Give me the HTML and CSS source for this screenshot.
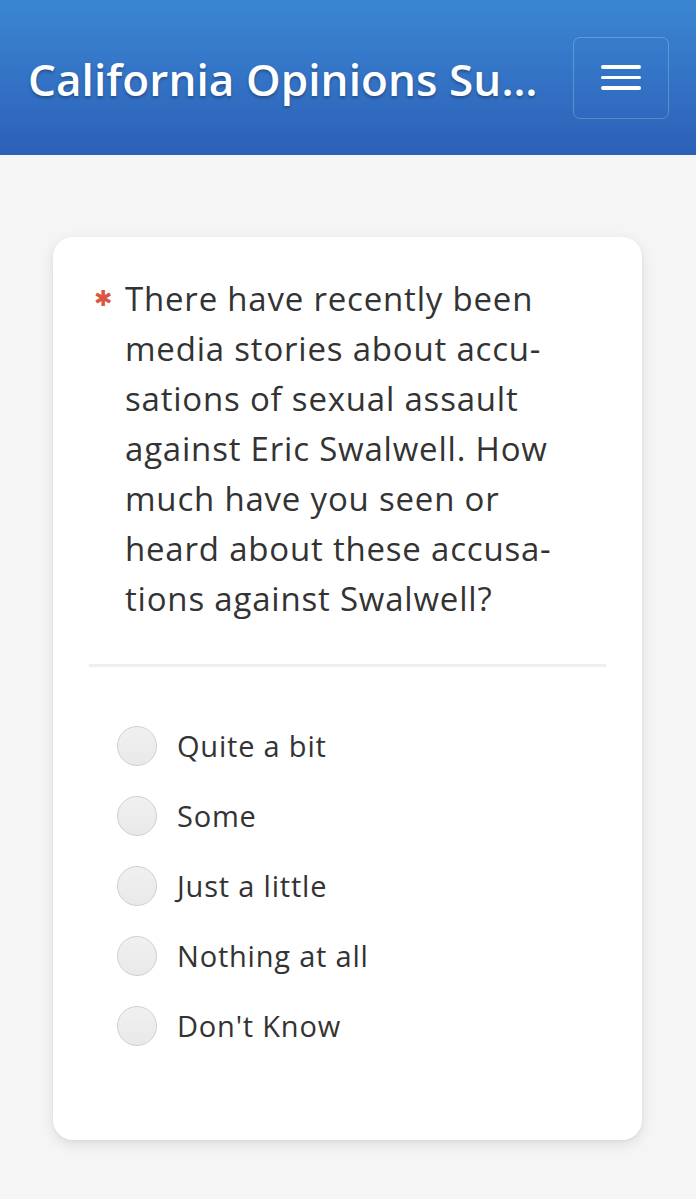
FILE: index.html
```html
<!DOCTYPE html>
<html lang="en">
<head>
<meta charset="utf-8">
<title>California Opinions Survey</title>
<link rel="stylesheet" href="styles.css">
</head>
<body>
<header class="topbar">
  <div class="brand">California Opinions Survey</div>
  <button class="menu-btn" aria-label="Menu">
    <span class="bar"></span><span class="bar"></span><span class="bar"></span>
  </button>
</header>
<main class="page">
  <section class="card">
    <div class="question">
      <span class="req">✱</span>
      <p class="qtext">There have recently been<br>media stories about accu-<br>sations of sexual assault<br>against Eric Swalwell. How<br>much have you seen or<br>heard about these accusa-<br>tions against Swalwell?</p>
    </div>
    <hr class="divider">
    <ul class="options">
      <li class="option"><span class="radio"></span><span class="label">Quite a bit</span></li>
      <li class="option"><span class="radio"></span><span class="label">Some</span></li>
      <li class="option"><span class="radio"></span><span class="label">Just a little</span></li>
      <li class="option"><span class="radio"></span><span class="label">Nothing at all</span></li>
      <li class="option"><span class="radio"></span><span class="label">Don't Know</span></li>
    </ul>
  </section>
</main>
</body>
</html>
```

FILE: styles.css
```css
* { box-sizing: border-box; }
html, body { margin: 0; padding: 0; }
body {
  background: #f5f5f5;
  font-family: "Open Sans", "Noto Sans", sans-serif;
  color: #333;
  width: 696px;
  min-height: 1199px;
}
.topbar {
  height: 155px;
  background: linear-gradient(to bottom, #3b86d3 0%, #2c60b7 100%);
  display: flex;
  align-items: center;
  justify-content: space-between;
  padding: 0 27px 0 28px;
}
.brand {
  color: #fff;
  font-family: "Open Sans", sans-serif;
  font-weight: 600;
  font-size: 44px;
  letter-spacing: 0.1px;
  white-space: nowrap;
  overflow: hidden;
  text-overflow: ellipsis;
  width: 516px;
  text-shadow: 0 2px 3px rgba(0,0,0,0.3);
  margin-top: 2px;
}
.menu-btn {
  width: 96px;
  height: 82px;
  background: transparent;
  border: 1.5px solid rgba(255,255,255,0.22);
  border-radius: 7px;
  display: flex;
  flex-direction: column;
  align-items: center;
  justify-content: center;
  gap: 7px;
  padding: 0;
}
.menu-btn .bar {
  display: block;
  width: 40px;
  height: 3.5px;
  border-radius: 2px;
  background: #fff;
}
.page {
  padding: 82px 54px 60px 53px;
}
.card {
  background: #fff;
  border-radius: 20px;
  box-shadow: 0 4px 14px rgba(0,0,0,0.10), 0 1px 3px rgba(0,0,0,0.05);
  padding: 37px 36px 79px 36px;
}
.question {
  display: flex;
  align-items: flex-start;
}
.req {
  width: 36px;
  flex: none;
  color: #d9573f;
  font-size: 22px;
  line-height: 50px;
  padding-left: 5px;
  font-family: "DejaVu Sans", sans-serif;
  font-weight: bold;
}
.qtext {
  margin: 0;
  font-size: 33px;
  line-height: 50px;
  color: #333;
  letter-spacing: 0.8px;
  white-space: nowrap;
}
.divider {
  border: 0;
  height: 3px;
  background: #efefef;
  margin: 40px 0 44px 0;
}
.options {
  list-style: none;
  margin: 0;
  padding: 0 0 0 28px;
}
.option {
  height: 70px;
  display: flex;
  align-items: center;
}
.radio {
  width: 40px;
  height: 40px;
  border-radius: 50%;
  border: 1.5px solid #cfcfcf;
  background: linear-gradient(to bottom, #f0f0f0, #e9e9e9);
  flex: none;
  margin-right: 20px;
}
.label {
  font-size: 29px;
  color: #333;
  letter-spacing: 0.8px;
  margin-top: -2px;
}
```
